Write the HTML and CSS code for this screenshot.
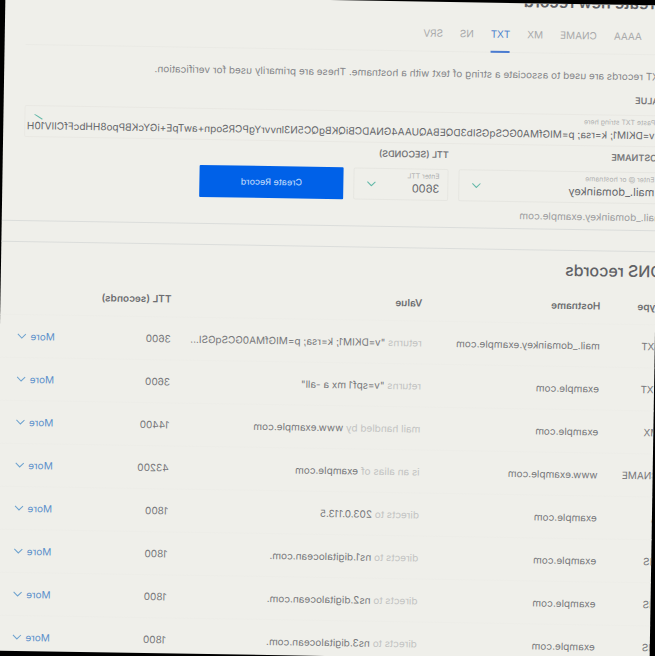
FILE: index.html
```
<!DOCTYPE html>
<html lang="en">
<head>
  <meta charset="UTF-8">
  <meta name="viewport" content="width=device-width, initial-scale=1.0">
  <title>DNS records</title>
  <link rel="stylesheet" href="styles.css">
</head>
<body>
  <div class="screen">
    <main class="page">
      <form class="create">
        <h2>Create new record</h2>
        <div class="tabs">
          <button type="button">A</button>
          <button type="button">AAAA</button>
          <button type="button">CNAME</button>
          <button type="button">MX</button>
          <button type="button" class="active">TXT</button>
          <button type="button">NS</button>
          <button type="button">SRV</button>
        </div>
        <p class="description">TXT records are used to associate a string of text with a hostname. These are primarily used for verification.</p>

        <div class="field field-value">
          <label for="value">VALUE</label>
          <div class="box">
            <span class="hint">Paste TXT string here</span>
            <input id="value" type="text" value="&quot;v=DKIM1; k=rsa; p=MIGfMA0GCSqGSIb3DQEBAQUAA4GNADCBiQKBgQC5N3lnvvrYgPCRSoqn+awTpE+iGYcKBPpo8HHbcFfCIlV10H">
            <svg class="chevron corner" viewBox="0 0 10 6"><path d="M1 5L9 0"/></svg>
          </div>
        </div>

        <div class="fields">
          <div class="field field-hostname">
            <label for="hostname">HOSTNAME</label>
            <div class="box">
              <span class="hint">Enter @ or hostname</span>
              <input id="hostname" type="text" value="mail._domainkey">
              <svg class="chevron" viewBox="0 0 10 6"><path d="M1 1L5 5L9 1"/></svg>
            </div>
          </div>
          <div class="field field-ttl">
            <label for="ttl">TTL (SECONDS)</label>
            <div class="box">
              <span class="hint">Enter TTL</span>
              <input id="ttl" type="text" value="3600">
              <svg class="chevron" viewBox="0 0 10 6"><path d="M1 1L5 5L9 1"/></svg>
            </div>
          </div>
          <button type="submit" class="submit">Create Record</button>
        </div>
        <p class="preview">mail._domainkey.example.com</p>
      </form>

      <section class="records">
        <h2>DNS records</h2>
        <table>
          <thead>
            <tr>
              <th class="col-type">Type</th>
              <th class="col-hostname">Hostname</th>
              <th class="col-value">Value</th>
              <th class="col-ttl">TTL (seconds)</th>
              <th class="col-more"></th>
            </tr>
          </thead>
          <tbody>
            <tr>
              <td>TXT</td>
              <td>mail._domainkey.example.com</td>
              <td><span>returns</span> "v=DKIM1; k=rsa; p=MIGfMA0GCSqGSI...</td>
              <td>3600</td>
              <td><button type="button" class="more">More <svg class="chevron" viewBox="0 0 10 6"><path d="M1 1L5 5L9 1"/></svg></button></td>
            </tr>
            <tr>
              <td>TXT</td>
              <td>example.com</td>
              <td><span>returns</span> "v=spf1 mx a -all"</td>
              <td>3600</td>
              <td><button type="button" class="more">More <svg class="chevron" viewBox="0 0 10 6"><path d="M1 1L5 5L9 1"/></svg></button></td>
            </tr>
            <tr>
              <td>MX</td>
              <td>example.com</td>
              <td><span>mail handled by</span> www.example.com</td>
              <td>14400</td>
              <td><button type="button" class="more">More <svg class="chevron" viewBox="0 0 10 6"><path d="M1 1L5 5L9 1"/></svg></button></td>
            </tr>
            <tr>
              <td>CNAME</td>
              <td>www.example.com</td>
              <td><span>is an alias of</span> example.com</td>
              <td>43200</td>
              <td><button type="button" class="more">More <svg class="chevron" viewBox="0 0 10 6"><path d="M1 1L5 5L9 1"/></svg></button></td>
            </tr>
            <tr>
              <td>A</td>
              <td>example.com</td>
              <td><span>directs to</span> 203.0.113.5</td>
              <td>1800</td>
              <td><button type="button" class="more">More <svg class="chevron" viewBox="0 0 10 6"><path d="M1 1L5 5L9 1"/></svg></button></td>
            </tr>
            <tr>
              <td>NS</td>
              <td>example.com</td>
              <td><span>directs to</span> ns1.digitalocean.com.</td>
              <td>1800</td>
              <td><button type="button" class="more">More <svg class="chevron" viewBox="0 0 10 6"><path d="M1 1L5 5L9 1"/></svg></button></td>
            </tr>
            <tr>
              <td>NS</td>
              <td>example.com</td>
              <td><span>directs to</span> ns2.digitalocean.com.</td>
              <td>1800</td>
              <td><button type="button" class="more">More <svg class="chevron" viewBox="0 0 10 6"><path d="M1 1L5 5L9 1"/></svg></button></td>
            </tr>
            <tr>
              <td>NS</td>
              <td>example.com</td>
              <td><span>directs to</span> ns3.digitalocean.com.</td>
              <td>1800</td>
              <td><button type="button" class="more">More <svg class="chevron" viewBox="0 0 10 6"><path d="M1 1L5 5L9 1"/></svg></button></td>
            </tr>
          </tbody>
        </table>
      </section>
    </main>
  </div>
</body>
</html>
```
FILE: styles.css
```
* {
  margin: 0;
  padding: 0;
  box-sizing: border-box;
}

body {
  background: #000;
  overflow: hidden;
  font-family: Inter, "Liberation Sans", sans-serif;
  font-size: 10px;
  line-height: 16px;
  color: #77787b;
}

button, input {
  font: inherit;
  color: inherit;
  background: none;
  border: 0;
  outline: 0;
}

/* the whole screen is mirrored and slightly tilted */
.screen {
  height: 100vh;
  overflow: hidden;
  background: #efefea;
  transform: rotate(0.94deg) scaleX(-1);
}

.page {
  margin: -12px 0 0 -6px;
}

h2 {
  font-size: 16px;
  font-weight: 500;
  line-height: 20px;
  color: #616266;
}

.create {
  padding-bottom: 5px;
  border-bottom: 1px solid #dbdddb;
}

.create h2 {
  font-weight: 600;
}

.tabs {
  display: flex;
  gap: 17px;
  margin: 13px 21px 0 0;
  border-bottom: 1px solid #eaeae5;
}

.tabs button {
  padding-bottom: 7px;
  margin-bottom: -1px;
  line-height: 20px;
  color: #a9aaab;
  border-bottom: 2px solid transparent;
}

.tabs .active {
  color: #4d82cd;
  border-color: #4a7bd0;
}

.description {
  margin-top: 13px;
  color: #858689;
}

.field label {
  display: block;
  margin-bottom: 8px;
  font-size: 9px;
  font-weight: 600;
  line-height: 12px;
}

.field-value {
  margin: 11px 21px 5px 0;
}

.box {
  position: relative;
  padding: 2px 8px 3px;
  border: 1px solid #e6e6e1;
  border-radius: 2px;
}

.field-value .box {
  padding-right: 0;
  padding-left: 4px;
  border-color: #e9e8e3;
}

.field-value .hint {
  padding-left: 4px;
}

.hint {
  display: block;
  font-size: 7px;
  line-height: 9px;
  color: #b0b1b1;
}

.box input {
  display: block;
  width: 100%;
  height: 16px;
  font-size: 11px;
  color: #66676b;
}

.field-value input {
  font-size: 10px;
}

.chevron {
  width: 10px;
  height: 6px;
  fill: none;
  stroke: #6fa3cf;
  stroke-width: 1;
}

.box .chevron {
  position: absolute;
  right: 12px;
  top: 12px;
  stroke: #62b8a8;
}

.box .corner {
  right: 8px;
  top: 8px;
}

.fields {
  display: flex;
  align-items: flex-end;
}

.field-hostname {
  width: 205px;
  margin-right: 10px;
}

.field-ttl {
  width: 95px;
  margin-right: 10px;
}

.submit {
  width: 144px;
  height: 32px;
  font-size: 9px;
  font-weight: 500;
  color: #b5d3fa;
  background: #0061e8;
  border-radius: 1px;
}

.preview {
  margin-top: 5px;
  color: #9b9c9e;
}

.records {
  margin-top: 20px;
  padding-top: 9px;
  border-top: 1px solid #dbdddb;
}

table {
  width: 100%;
  margin-top: 8px;
  table-layout: fixed;
  border-collapse: collapse;
}

th {
  height: 35px;
  font-weight: 600;
  text-align: left;
  color: #6c6d70;
}

td {
  height: 43px;
  white-space: nowrap;
  border-top: 1px solid #edede8;
}

td span {
  color: #c2c3c2;
}

.col-type {
  width: 61px;
}

.col-hostname {
  width: 178px;
}

.col-value {
  width: 251px;
}

.col-ttl {
  width: 116px;
}

.more {
  display: flex;
  align-items: center;
  gap: 4px;
  color: #5b90ca;
}
```
